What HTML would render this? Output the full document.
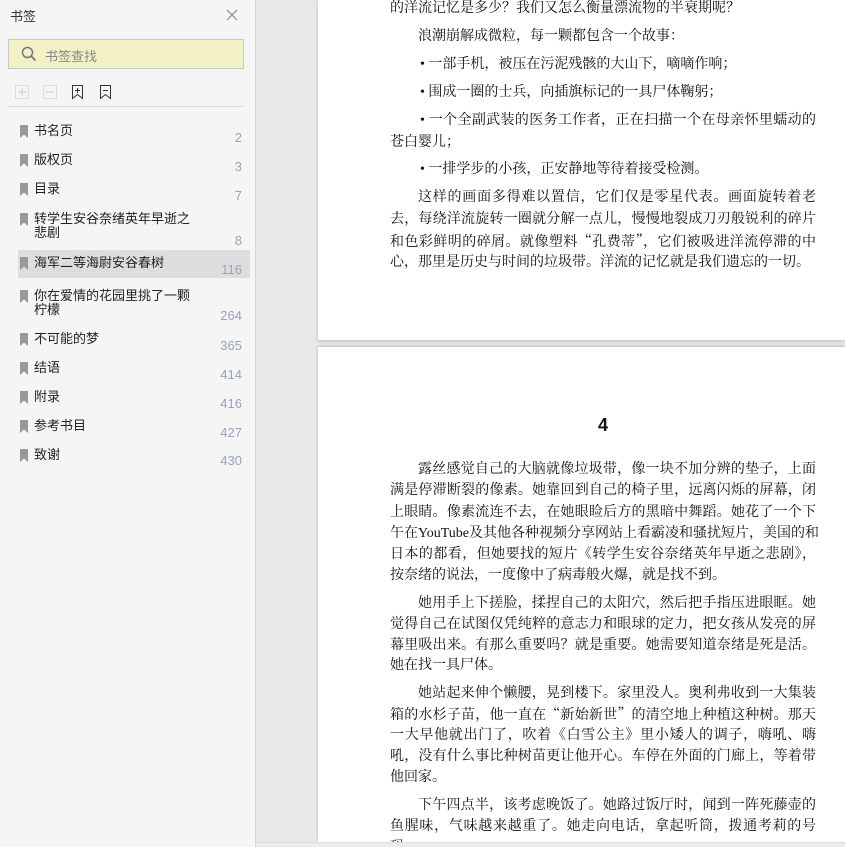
<!DOCTYPE html>
<html><head><meta charset="utf-8"><style>
*{margin:0;padding:0;box-sizing:border-box}
body{width:845px;height:847px;overflow:hidden;position:relative;background:#e8e8e8;font-family:"Liberation Sans","Noto Sans CJK SC",sans-serif}
#side{position:absolute;left:0;top:0;width:256px;height:847px;background:#f5f5f5;border-right:1px solid #d4d4d8}
.t{position:absolute;left:10px;top:6px;font-size:13px;color:#333}
.search{position:absolute;left:8px;top:39px;width:236px;height:30px;background:#f1f1c5;border:1px solid #c6c8c8}
.search span{position:absolute;left:36px;top:6px;font-size:13px;color:#888}
.sep{position:absolute;left:8px;top:106px;width:236px;height:1px;background:#dcdcdc}
.it{position:absolute;left:18px;width:232px;font-size:13px;color:#222;line-height:14px}
.it .n{position:absolute;right:8px;font-size:13px;color:#97a3b8}
.it .bm{position:absolute;left:2px;top:1px}
.it .tx{position:absolute;left:16px;top:0}
.hl{background:#dddde0}
.page{position:absolute;left:318px;width:527px;background:#fff}
.l{position:absolute;left:390px;width:426px;height:21px;line-height:21px;margin-top:2px;font-family:"Liberation Serif","Noto Serif CJK SC",serif;font-size:14px;color:#111;white-space:nowrap}
.j{text-align:justify;text-align-last:justify}
.q{font-family:"Noto Serif CJK SC",serif}
</style></head><body>
<div class="page" style="top:0;height:340px;box-shadow:0 1px 3px #bbb"></div>
<div class="page" style="top:347px;height:495px;box-shadow:0 -1px 3px #bbb"></div>
<div style="position:absolute;left:256px;top:842px;width:589px;height:5px;background:#ececec;border-top:1px solid #ddd"></div>

<div id="side">
<div class="t">书签</div>
<svg style="position:absolute;left:226px;top:9px" width="12" height="12"><path d="M1 1L11 11M11 1L1 11" stroke="#888" stroke-width="1.2"/></svg>
<div class="search"><svg style="position:absolute;left:12px;top:6px" width="16" height="16"><circle cx="6.5" cy="6.5" r="5" fill="none" stroke="#777" stroke-width="1.5"/><path d="M10 10L14.5 14.5" stroke="#777" stroke-width="1.8"/></svg><span>书签查找</span></div>
<svg style="position:absolute;left:14px;top:84px" width="100" height="16">
<rect x="1.5" y="1.5" width="13" height="13" fill="none" stroke="#ccc" stroke-dasharray="1.5 1"/><path d="M8 4v8M4 8h8" stroke="#ccc"/>
<rect x="29.5" y="1.5" width="13" height="13" fill="none" stroke="#ccc" stroke-dasharray="1.5 1"/><path d="M32 8h8" stroke="#ccc"/>
<path d="M58.5 1.5h10v13l-5-4-5 4z" fill="none" stroke="#333"/><path d="M63.5 4v5M61 6.5h5" stroke="#333"/>
<path d="M86.5 1.5h10v13l-5-4-5 4z" fill="none" stroke="#333"/><path d="M89 6.5h5" stroke="#333"/>
</svg>
<div class="sep"></div>
</div>

<div class="l" style="top:-4px">的洋流记忆是多少？我们又怎么衡量漂流物的半衰期呢？</div>
<div class="l" style="top:24px;padding-left:28px">浪潮崩解成微粒，每一颗都包含一个故事：</div>
<div class="l" style="top:52px;padding-left:30px">• 一部手机，被压在污泥残骸的大山下，嘀嘀作响；</div>
<div class="l" style="top:80px;padding-left:30px">• 围成一圈的士兵，向插旗标记的一具尸体鞠躬；</div>
<div class="l j" style="top:108px;padding-left:30px">• 一个全副武装的医务工作者，正在扫描一个在母亲怀里蠕动的</div>
<div class="l" style="top:130px">苍白婴儿；</div>
<div class="l" style="top:157px;padding-left:30px">• 一排学步的小孩，正安静地等待着接受检测。</div>
<div class="l j" style="top:185px;padding-left:28px">这样的画面多得难以置信，它们仅是零星代表。画面旋转着老</div>
<div class="l j" style="top:207px">去，每绕洋流旋转一圈就分解一点儿，慢慢地裂成刀刃般锐利的碎片</div>
<div class="l j" style="top:229px">和色彩鲜明的碎屑。就像塑料<span class="q">“</span>孔费蒂<span class="q">”</span>，它们被吸进洋流停滞的中</div>
<div class="l" style="top:250px">心，那里是历史与时间的垃圾带。洋流的记忆就是我们遗忘的一切。</div>

<div style="position:absolute;left:390px;width:426px;top:415px;text-align:center;font:bold 18px 'Liberation Sans',sans-serif;color:#111">4</div>

<div class="l j" style="top:457px;padding-left:28px">露丝感觉自己的大脑就像垃圾带，像一块不加分辨的垫子，上面</div>
<div class="l j" style="top:478px">满是停滞断裂的像素。她靠回到自己的椅子里，远离闪烁的屏幕，闭</div>
<div class="l j" style="top:500px">上眼睛。像素流连不去，在她眼睑后方的黑暗中舞蹈。她花了一个下</div>
<div class="l j" style="top:521px">午在YouTube及其他各种视频分享网站上看霸凌和骚扰短片，美国的和</div>
<div class="l j" style="top:542px">日本的都看，但她要找的短片《转学生安谷奈绪英年早逝之悲剧》，</div>
<div class="l" style="top:563px">按奈绪的说法，一度像中了病毒般火爆，就是找不到。</div>
<div class="l j" style="top:591px;padding-left:28px">她用手上下搓脸，揉捏自己的太阳穴，然后把手指压进眼眶。她</div>
<div class="l j" style="top:612px">觉得自己在试图仅凭纯粹的意志力和眼球的定力，把女孩从发亮的屏</div>
<div class="l j" style="top:633px">幕里吸出来。有那么重要吗？就是重要。她需要知道奈绪是死是活。</div>
<div class="l" style="top:653px">她在找一具尸体。</div>
<div class="l j" style="top:681px;padding-left:28px">她站起来伸个懒腰，晃到楼下。家里没人。奥利弗收到一大集装</div>
<div class="l j" style="top:702px">箱的水杉子苗，他一直在<span class="q">“</span>新始新世<span class="q">”</span>的清空地上种植这种树。那天</div>
<div class="l j" style="top:723px">一大早他就出门了，吹着《白雪公主》里小矮人的调子，嗨吼、嗨</div>
<div class="l j" style="top:744px">吼，没有什么事比种树苗更让他开心。车停在外面的门廊上，等着带</div>
<div class="l" style="top:765px">他回家。</div>
<div class="l j" style="top:793px;padding-left:28px">下午四点半，该考虑晚饭了。她路过饭厅时，闻到一阵死藤壶的</div>
<div class="l j" style="top:814px">鱼腥味，气味越来越重了。她走向电话，拿起听筒，拨通考莉的号</div>
<div class="l" style="top:835px;height:5px;overflow:hidden">码。</div>

<div class="it" style="top:124px;height:26px"><svg class="bm" width="8" height="13"><path d="M0 0h8v13l-4-3.5L0 13z" fill="#999"/></svg><span class="tx">书名页</span><span class="n" style="top:7px">2</span></div>
<div class="it" style="top:153px;height:26px"><svg class="bm" width="8" height="13"><path d="M0 0h8v13l-4-3.5L0 13z" fill="#999"/></svg><span class="tx">版权页</span><span class="n" style="top:7px">3</span></div>
<div class="it" style="top:182px;height:26px"><svg class="bm" width="8" height="13"><path d="M0 0h8v13l-4-3.5L0 13z" fill="#999"/></svg><span class="tx">目录</span><span class="n" style="top:7px">7</span></div>
<div class="it" style="top:212px;height:36px"><svg class="bm" width="8" height="13"><path d="M0 0h8v13l-4-3.5L0 13z" fill="#999"/></svg><span class="tx">转学生安谷奈绪英年早逝之<br>悲剧</span><span class="n" style="top:22px">8</span></div>
<div class="it hl" style="top:250px;height:28px"><svg class="bm" style="top:7px" width="8" height="13"><path d="M0 0h8v13l-4-3.5L0 13z" fill="#999"/></svg><span class="tx" style="top:6px">海军二等海尉安谷春树</span><span class="n" style="top:13px">116</span></div>
<div class="it" style="top:289px;height:36px"><svg class="bm" width="8" height="13"><path d="M0 0h8v13l-4-3.5L0 13z" fill="#999"/></svg><span class="tx">你在爱情的花园里挑了一颗<br>柠檬</span><span class="n" style="top:20px">264</span></div>
<div class="it" style="top:332px;height:26px"><svg class="bm" width="8" height="13"><path d="M0 0h8v13l-4-3.5L0 13z" fill="#999"/></svg><span class="tx">不可能的梦</span><span class="n" style="top:7px">365</span></div>
<div class="it" style="top:361px;height:26px"><svg class="bm" width="8" height="13"><path d="M0 0h8v13l-4-3.5L0 13z" fill="#999"/></svg><span class="tx">结语</span><span class="n" style="top:7px">414</span></div>
<div class="it" style="top:390px;height:26px"><svg class="bm" width="8" height="13"><path d="M0 0h8v13l-4-3.5L0 13z" fill="#999"/></svg><span class="tx">附录</span><span class="n" style="top:7px">416</span></div>
<div class="it" style="top:419px;height:26px"><svg class="bm" width="8" height="13"><path d="M0 0h8v13l-4-3.5L0 13z" fill="#999"/></svg><span class="tx">参考书目</span><span class="n" style="top:7px">427</span></div>
<div class="it" style="top:448px;height:26px"><svg class="bm" width="8" height="13"><path d="M0 0h8v13l-4-3.5L0 13z" fill="#999"/></svg><span class="tx">致谢</span><span class="n" style="top:6px">430</span></div>
</body></html>
